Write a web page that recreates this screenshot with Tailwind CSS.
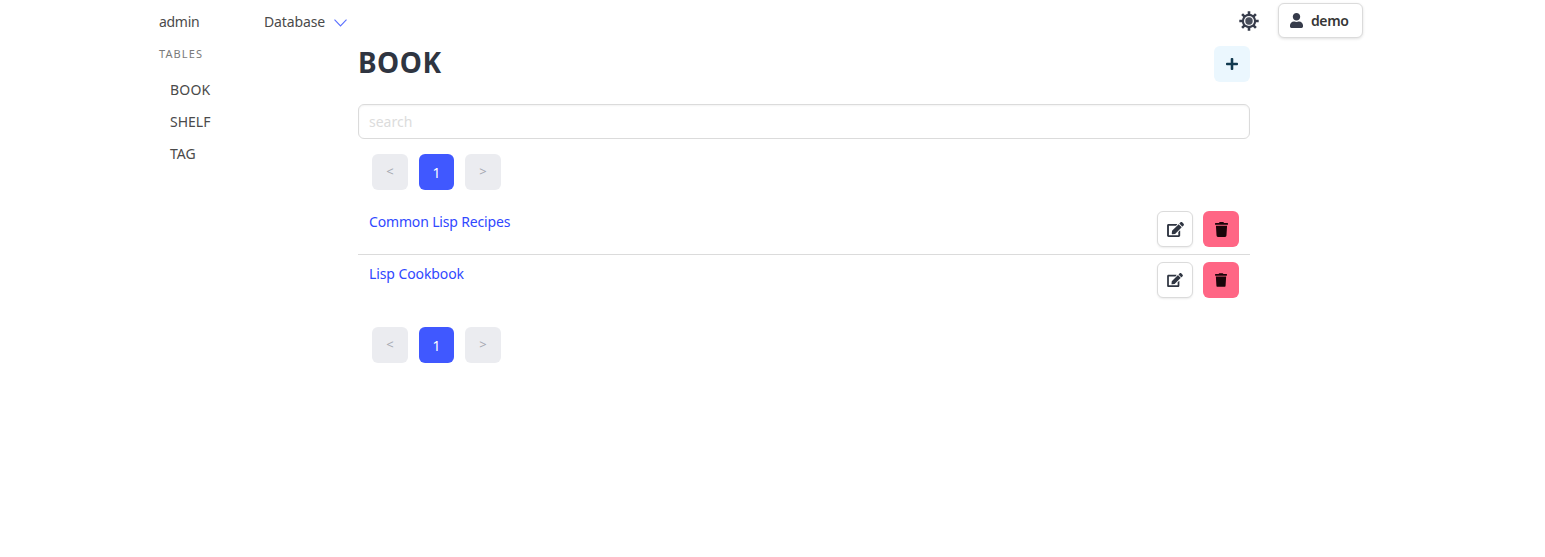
<!doctype html>
<html lang="en">
<head>
    <meta charset="UTF-8">
    <meta name="viewport" content="width=device-width, initial-scale=1.0">
    <title>Admin - BOOK</title>
    <script src="https://cdn.jsdelivr.net/npm/@tailwindcss/browser@4"></script>
</head>
<body class="bg-white font-['Noto_Sans',sans-serif] text-[14px] text-[#363636]">
<!-- Navbar -->
<nav class="ml-[159px] w-[1204px] h-[42px] flex items-center">
    <span class="w-[105px] tracking-[-0.3px] text-[#4a4a4a]">admin</span>
    <span class="text-[#4a4a4a] tracking-[-0.12px]">Database</span>
    <svg class="ml-[9px] w-[13px] h-[8px] mt-[3px]" viewBox="0 0 13 8" fill="none" stroke="#5a70ff" stroke-width="1.1"><path d="M0.5 0.7 L6.5 7 L12.5 0.7"/></svg>
    <svg class="ml-auto w-[20px] h-[20px]" viewBox="0 0 20 20" fill="#363b4a" stroke="#363b4a">
        <path stroke-width="2.6" d="M10 0.3 V19.7 M0.3 10 H19.7 M3.1 3.1 L16.9 16.9 M3.1 16.9 L16.9 3.1"/>
        <circle cx="10" cy="10" r="7.2" stroke="none"/>
        <circle cx="10" cy="10" r="5.1" fill="#f4f4f6" stroke="none"/>
        <circle cx="10" cy="10" r="3.7" fill="#4a4f5c" stroke="none"/>
    </svg>
    <button class="ml-[19px] w-[85px] h-[35px] -mt-[1px] flex items-center gap-[8px] pl-[11px] rounded-[6px] border border-[#dbdbdb] bg-white font-semibold text-[#363636] tracking-[-0.4px] shadow-[0_1px_3px_rgba(10,10,10,0.12)]">
        <svg class="w-[13px] h-[15px]" viewBox="0 0 448 512" fill="#363b4a"><path d="M224 256c70.7 0 128-57.3 128-128S294.7 0 224 0 96 57.3 96 128s57.3 128 128 128zm89.6 32h-16.7c-22.2 10.2-46.9 16-72.9 16s-50.6-5.8-72.9-16h-16.7C60.2 288 0 348.2 0 422.4V464c0 26.5 21.5 48 48 48h352c26.5 0 48-21.5 48-48v-41.6c0-74.2-60.2-134.4-134.4-134.4z"/></svg>
        demo
    </button>
</nav>

<div class="flex ml-[159px]">
    <!-- Sidebar -->
    <aside class="w-[199px] shrink-0">
        <p class="mt-[5px] text-[11px] leading-[14px] tracking-[1.1px] text-[#7a7a7a]">TABLES</p>
        <ul class="mt-[12px] text-[#4a4a4a]">
            <li class="pl-[11px] h-[32px] flex items-center tracking-[0.2px]">BOOK</li>
            <li class="pl-[11px] h-[32px] flex items-center">SHELF</li>
            <li class="pl-[11px] h-[32px] flex items-center">TAG</li>
        </ul>
    </aside>

    <!-- Main -->
    <main class="w-[892px] shrink-0">
        <div class="flex justify-between items-center mt-[4px] h-[36px]">
            <h1 class="text-[28px] -mt-[4px] font-bold text-[#2f3541] tracking-[0.5px]">BOOK</h1>
            <button class="w-[36px] h-[36px] rounded-[6px] bg-[#ebf7fe] flex items-center justify-center">
                <svg class="w-[12px] h-[14px]" viewBox="0 0 448 512" fill="#10394f"><path d="M416 208H272V64c0-17.67-14.33-32-32-32h-32c-17.67 0-32 14.33-32 32v144H32c-17.67 0-32 14.33-32 32v32c0 17.67 14.33 32 32 32h144v144c0 17.67 14.33 32 32 32h32c17.67 0 32-14.33 32-32V304h144c17.67 0 32-14.33 32-32v-32c0-17.67-14.33-32-32-32z"/></svg>
            </button>
        </div>

        <input type="text" placeholder="search" class="mt-[22px] w-full h-[35px] px-[10px] rounded-[6px] border border-[#dbdbdb] placeholder:text-[#dcdcdc] shadow-[inset_0_1px_2px_rgba(10,10,10,0.05)]">

        <!-- Pagination -->
        <div class="mt-[15px] ml-[14px] flex gap-[11px] h-[36px]">
            <span class="w-[36px] rounded-[6px] bg-[#ebecf0] text-[#a5a8b0] flex items-center justify-center text-[13px]">&lt;</span>
            <span class="w-[35px] rounded-[6px] bg-[#4058ff] text-white flex items-center justify-center text-[14px]">1</span>
            <span class="w-[36px] rounded-[6px] bg-[#ebecf0] text-[#a5a8b0] flex items-center justify-center text-[13px]">&gt;</span>
        </div>

        <!-- Rows -->
        <div class="mt-[13px]">
            <div class="h-[52px] border-b border-[#dbdbdb] px-[11px] flex justify-between pt-[8px]">
                <a class="text-[#3048ff] leading-[22px] tracking-[-0.16px]">Common Lisp Recipes</a>
                <div class="flex gap-[10px]">
                    <button class="w-[36px] h-[36px] rounded-[6px] border border-[#dbdbdb] bg-white flex items-center justify-center shadow-[0_1px_2px_rgba(10,10,10,0.08)]">
                        <svg class="w-[17px] h-[15px]" viewBox="0 0 576 512" fill="#2f3541"><path d="M402.6 83.2l90.2 90.2c3.8 3.8 3.8 10 0 13.8L274.4 405.6l-92.8 10.3c-12.4 1.4-22.9-9.1-21.5-21.5l10.3-92.8L388.8 83.2c3.8-3.8 10-3.8 13.8 0zm162-22.9l-48.8-48.8c-15.2-15.2-39.9-15.2-55.2 0l-35.4 35.4c-3.8 3.8-3.8 10 0 13.8l90.2 90.2c3.8 3.8 10 3.8 13.8 0l35.4-35.4c15.2-15.3 15.2-40 0-55.2zM384 346.2V448H64V128h229.8c3.2 0 6.2-1.3 8.5-3.5l40-40c7.6-7.6 2.2-20.5-8.5-20.5H48C21.5 64 0 85.5 0 112v352c0 26.5 21.5 48 48 48h352c26.5 0 48-21.5 48-48V306.2c0-10.7-12.9-16-20.5-8.5l-40 40c-2.2 2.3-3.5 5.3-3.5 8.5z"/></svg>
                    </button>
                    <button class="w-[36px] h-[36px] rounded-[6px] bg-[#ff6685] flex items-center justify-center">
                        <svg class="w-[13px] h-[15px]" viewBox="0 0 448 512" fill="#1a0509"><path d="M432 32H312l-9.4-18.7A24 24 0 0 0 281.1 0H166.8a23.72 23.72 0 0 0-21.4 13.3L136 32H16A16 16 0 0 0 0 48v32a16 16 0 0 0 16 16h416a16 16 0 0 0 16-16V48a16 16 0 0 0-16-16zM53.2 467a48 48 0 0 0 47.9 45h245.8a48 48 0 0 0 47.9-45L416 128H32z"/></svg>
                    </button>
                </div>
            </div>
            <div class="h-[51px] px-[11px] flex justify-between pt-[7px]">
                <a class="text-[#3048ff] leading-[24px] tracking-[-0.1px]">Lisp Cookbook</a>
                <div class="flex gap-[10px]">
                    <button class="w-[36px] h-[36px] rounded-[6px] border border-[#dbdbdb] bg-white flex items-center justify-center shadow-[0_1px_2px_rgba(10,10,10,0.08)]">
                        <svg class="w-[16px] h-[14px]" viewBox="0 0 576 512" fill="#2f3541"><path d="M402.6 83.2l90.2 90.2c3.8 3.8 3.8 10 0 13.8L274.4 405.6l-92.8 10.3c-12.4 1.4-22.9-9.1-21.5-21.5l10.3-92.8L388.8 83.2c3.8-3.8 10-3.8 13.8 0zm162-22.9l-48.8-48.8c-15.2-15.2-39.9-15.2-55.2 0l-35.4 35.4c-3.8 3.8-3.8 10 0 13.8l90.2 90.2c3.8 3.8 10 3.8 13.8 0l35.4-35.4c15.2-15.3 15.2-40 0-55.2zM384 346.2V448H64V128h229.8c3.2 0 6.2-1.3 8.5-3.5l40-40c7.6-7.6 2.2-20.5-8.5-20.5H48C21.5 64 0 85.5 0 112v352c0 26.5 21.5 48 48 48h352c26.5 0 48-21.5 48-48V306.2c0-10.7-12.9-16-20.5-8.5l-40 40c-2.2 2.3-3.5 5.3-3.5 8.5z"/></svg>
                    </button>
                    <button class="w-[36px] h-[36px] rounded-[6px] bg-[#ff6685] flex items-center justify-center">
                        <svg class="w-[12px] h-[14px]" viewBox="0 0 448 512" fill="#1a0509"><path d="M432 32H312l-9.4-18.7A24 24 0 0 0 281.1 0H166.8a23.72 23.72 0 0 0-21.4 13.3L136 32H16A16 16 0 0 0 0 48v32a16 16 0 0 0 16 16h416a16 16 0 0 0 16-16V48a16 16 0 0 0-16-16zM53.2 467a48 48 0 0 0 47.9 45h245.8a48 48 0 0 0 47.9-45L416 128H32z"/></svg>
                    </button>
                </div>
            </div>
        </div>

        <div class="mt-[21px] ml-[14px] flex gap-[11px] h-[36px]">
            <span class="w-[36px] rounded-[6px] bg-[#ebecf0] text-[#a5a8b0] flex items-center justify-center text-[13px]">&lt;</span>
            <span class="w-[35px] rounded-[6px] bg-[#4058ff] text-white flex items-center justify-center text-[14px]">1</span>
            <span class="w-[36px] rounded-[6px] bg-[#ebecf0] text-[#a5a8b0] flex items-center justify-center text-[13px]">&gt;</span>
        </div>
    </main>
</div>
</body>
</html>
